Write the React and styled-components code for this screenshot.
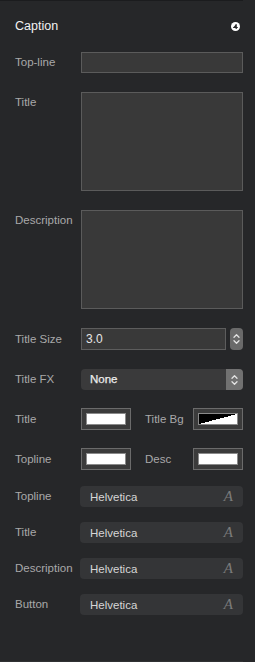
import React from "react";
import styled, { createGlobalStyle } from "styled-components";

const GlobalStyle = createGlobalStyle`
  html, body {
    margin: 0;
    padding: 0;
    background: #262729;
  }
  body {
    font-family: "Liberation Sans", Arial, Helvetica, sans-serif;
    -webkit-font-smoothing: antialiased;
  }
`;

const fonts = ["Topline", "Title", "Description", "Button"];

function Chevrons({ color = "#e4e4e4" }) {
  return (
    <svg width="7" height="12" viewBox="0 0 7 12" fill="none">
      <path d="M1 4.2 L3.5 1.7 L6 4.2" stroke={color} strokeWidth="1.3" strokeLinecap="round" strokeLinejoin="round" />
      <path d="M1 7.8 L3.5 10.3 L6 7.8" stroke={color} strokeWidth="1.3" strokeLinecap="round" strokeLinejoin="round" />
    </svg>
  );
}

function App() {
  return (
    <Panel>
      <GlobalStyle />
      <Content>
        <Header>
          <Heading>Caption</Heading>
          <svg width="9" height="9" viewBox="0 0 9 9">
            <circle cx="4.5" cy="4.5" r="4.5" fill="#ffffff" />
            <path d="M2.2 5.4 L5 2.2 L5 5.4 Z" fill="#262729" />
            <rect x="4.6" y="2.2" width="1.2" height="4.8" fill="#262729" />
            <rect x="2.2" y="5" width="4.6" height="1" fill="#262729" />
          </svg>
        </Header>

        <Form>
          <Row>
            <Label>Top-line</Label>
            <Field />
          </Row>
          <Row $top>
            <Label>Title</Label>
            <Field $height={99} />
          </Row>
          <Row $top>
            <Label>Description</Label>
            <Field $height={99} />
          </Row>
          <Row>
            <Label>Title Size</Label>
            <SizeInput>3.0</SizeInput>
            <Stepper>
              <Chevrons />
            </Stepper>
          </Row>
          <Row>
            <Label>Title FX</Label>
            <Select>
              <SelectText>None</SelectText>
              <SelectArrow>
                <Chevrons />
              </SelectArrow>
            </Select>
          </Row>
        </Form>

        <Wells>
          <Row>
            <Label>Title</Label>
            <Well>
              <Swatch />
            </Well>
            <SideLabel>Title Bg</SideLabel>
            <Well>
              <Swatch $split />
            </Well>
          </Row>
          <Row>
            <Label>Topline</Label>
            <Well>
              <Swatch />
            </Well>
            <SideLabel>Desc</SideLabel>
            <Well>
              <Swatch />
            </Well>
          </Row>
        </Wells>

        <Fonts>
          {fonts.map((name) => (
            <Row key={name}>
              <Label $width={65}>{name}</Label>
              <FontField>
                <span>Helvetica</span>
                <FontGlyph>A</FontGlyph>
              </FontField>
            </Row>
          ))}
        </Fonts>
      </Content>
    </Panel>
  );
}

const Panel = styled.div`
  width: 255px;
  height: 662px;
  background: #262729;
  overflow: hidden;
`;

const Content = styled.div`
  width: 243px;
  height: 662px;
  box-sizing: border-box;
  padding-left: 15px;
  border-top: 1px solid #1b1c1e;
  border-bottom: 1px solid #303133;
  display: flex;
  flex-direction: column;
`;

const Header = styled.div`
  display: flex;
  align-items: center;
  justify-content: space-between;
  height: 16px;
  margin-top: 17px;
  padding-right: 3px;
`;

const Heading = styled.span`
  font-size: 12.5px;
  color: #f2f2f2;
`;

const Form = styled.div`
  display: flex;
  flex-direction: column;
  gap: 19px;
  margin-top: 18px;
`;

const Wells = styled.div`
  display: flex;
  flex-direction: column;
  gap: 18px;
  margin-top: 18px;
`;

const Fonts = styled.div`
  display: flex;
  flex-direction: column;
  gap: 15px;
  margin-top: 16px;
`;

const Row = styled.div`
  display: flex;
  align-items: ${(p) => (p.$top ? "flex-start" : "center")};
`;

const Label = styled.div`
  width: ${(p) => p.$width || 66}px;
  flex-shrink: 0;
  font-size: 11.5px;
  line-height: 21px;
  color: #a9a9a9;
  white-space: nowrap;
`;

const SideLabel = styled(Label)`
  width: 48px;
  margin-left: 14px;
`;

const Field = styled.div`
  flex: 1;
  height: ${(p) => p.$height || 21}px;
  box-sizing: border-box;
  border: 1px solid #5b5b5b;
  background: #393939;
`;

const SizeInput = styled.div`
  width: 145px;
  height: 22px;
  box-sizing: border-box;
  border: 1px solid #5d5d5d;
  background: #393939;
  padding-left: 4px;
  font-size: 12px;
  line-height: 20px;
  color: #e6e6e6;
`;

const Stepper = styled.div`
  width: 13px;
  height: 22px;
  margin-left: 4px;
  border-radius: 4px;
  background: #6a6a6a;
  display: flex;
  align-items: center;
  justify-content: center;
`;

const Select = styled.div`
  flex: 1;
  height: 21px;
  display: flex;
  border-radius: 4px;
  background: #3a3a3b;
  overflow: hidden;
`;

const SelectText = styled.span`
  flex: 1;
  padding-left: 9px;
  font-size: 11.5px;
  line-height: 21px;
  color: #ececec;
  -webkit-text-stroke: 0.25px #ececec;
`;

const SelectArrow = styled.div`
  width: 17px;
  background: #717171;
  display: flex;
  align-items: center;
  justify-content: center;
`;

const Well = styled.div`
  width: 50px;
  height: 22px;
  box-sizing: border-box;
  padding: 4px;
  border: 1px solid #6b6b6b;
  background: #3b3b3b;
  display: flex;
`;

const Swatch = styled.div`
  flex: 1;
  box-sizing: border-box;
  border: 1px solid #8a8a8a;
  background: ${(p) =>
    p.$split ? "linear-gradient(to bottom right, #000 50%, #fff 50%)" : "#fff"};
`;

const FontField = styled.div`
  flex: 1;
  height: 21px;
  box-sizing: border-box;
  padding: 0 10px;
  border-radius: 4px;
  background: #343537;
  display: flex;
  align-items: center;
  justify-content: space-between;
  font-size: 11.5px;
  color: #d6d6d6;
`;

const FontGlyph = styled.span`
  font-family: "Liberation Serif", "Times New Roman", serif;
  font-style: italic;
  font-size: 15px;
  color: #7b7b7b;
`;

export default App;
